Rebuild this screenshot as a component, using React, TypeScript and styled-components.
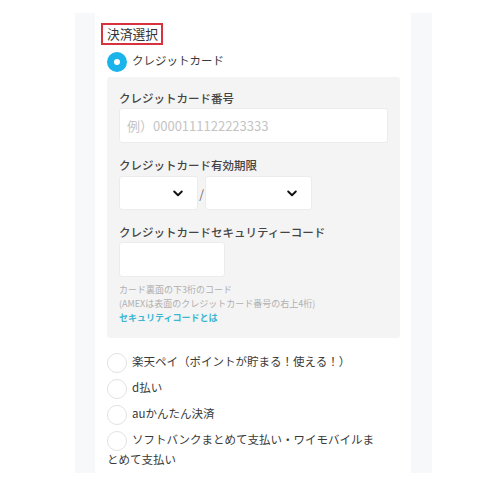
import React from 'react'
import styled, { createGlobalStyle } from 'styled-components'

const GlobalStyle = createGlobalStyle`
  html, body {
    margin: 0;
    padding: 0;
    background: #ffffff;
  }
  body {
    font-family: "Noto Sans CJK JP", "Noto Sans", sans-serif;
    color: #333333;
  }
`

const Page = styled.div`
  padding: 13px 0 0 75px;
`

const Column = styled.div`
  width: 357px;
  height: 460px;
  background: #f7f8fa;
  padding: 0 21px 0 20px;
  box-sizing: border-box;
`

const Panel = styled.div`
  height: 100%;
  background: #ffffff;
  padding: 7px 11px 0 12px;
  box-sizing: border-box;
`

const Heading = styled.h2`
  display: inline-block;
  margin: 0 0 0 -6px;
  padding: 0 3px 0 4px;
  border: 2px solid #d8323f;
  font-size: 12.75px;
  line-height: 18px;
  font-weight: 400;
  color: #333333;
`

const Option = styled.div<{ $gap: number }>`
  margin-top: ${(p) => p.$gap}px;
  width: 275px;
  font-size: 11.5px;
  line-height: 20px;
  color: #3a3a3a;
`

const Radio = styled.span<{ $checked?: boolean }>`
  display: inline-block;
  width: 20px;
  height: 20px;
  margin: -4px 5px -4px 0;
  vertical-align: middle;
  box-sizing: border-box;
  border-radius: 50%;
  background: #ffffff;
  border: ${(p) => (p.$checked ? '7px solid #1ab4ea' : '1px solid #e2e2e2')};
`

const CardBox = styled.div`
  margin-top: 7px;
  width: 293px;
  background: #f4f4f4;
  border-radius: 3px;
  padding: 13px 12px 13px 12px;
  box-sizing: border-box;
`

const Label = styled.div<{ $spaced?: boolean }>`
  margin-top: ${(p) => (p.$spaced ? '14px' : '0')};
  font-size: 11.5px;
  line-height: 16px;
  font-weight: 500;
  color: #444444;
`

const TextInput = styled.input<{ $width: number }>`
  display: block;
  margin-top: 2px;
  width: ${(p) => p.$width}px;
  height: 35px;
  box-sizing: border-box;
  border: 1px solid #ececec;
  border-radius: 3px;
  background: #ffffff;
  padding: 0 7px;
  font-family: "Noto Sans CJK JP", "Noto Sans", sans-serif;
  font-size: 13px;
  outline: none;
  &::placeholder {
    color: #c4c4c4;
  }
`

const ExpiryRow = styled.div`
  display: flex;
  align-items: center;
  margin-top: 3px;
`

const Select = styled.div<{ $width: number }>`
  width: ${(p) => p.$width}px;
  height: 34px;
  box-sizing: border-box;
  border: 1px solid #ececec;
  border-radius: 3px;
  background: #ffffff;
  display: flex;
  align-items: center;
  justify-content: flex-end;
  padding-right: 14px;
`

const Slash = styled.span`
  width: 7px;
  text-align: center;
  font-size: 12px;
  color: #666666;
`

const Help = styled.div`
  margin-top: 6px;
  font-size: 9px;
  line-height: 14px;
  color: #b0b0b0;
`

const HelpLink = styled.div`
  font-size: 9px;
  line-height: 14px;
  font-weight: 700;
  color: #3bb7d2;
`

const Chevron = () => (
  <svg width="10" height="7" viewBox="0 0 10 7">
    <polyline
      points="1.2,1.5 5,5.2 8.8,1.5"
      fill="none"
      stroke="#111111"
      strokeWidth="1.9"
      strokeLinecap="round"
      strokeLinejoin="round"
    />
  </svg>
)

const others = [
  '楽天ペイ（ポイントが貯まる！使える！）',
  'd払い',
  'auかんたん決済',
  'ソフトバンクまとめて支払い・ワイモバイルまとめて支払い',
]

const App = () => (
  <>
    <GlobalStyle />
    <Page>
      <Column>
        <Panel>
          <Heading>決済選択</Heading>
          <Option $gap={5}>
            <Radio $checked />
            クレジットカード
          </Option>
          <CardBox>
            <Label>クレジットカード番号</Label>
            <TextInput $width={269} placeholder="例）0000111122223333" />
            <Label $spaced>クレジットカード有効期限</Label>
            <ExpiryRow>
              <Select $width={79}>
                <Chevron />
              </Select>
              <Slash>/</Slash>
              <Select $width={107}>
                <Chevron />
              </Select>
            </ExpiryRow>
            <Label $spaced>クレジットカードセキュリティーコード</Label>
            <TextInput $width={106} />
            <Help>
              カード裏面の下3桁のコード
              <br />
              (AMEXは表面のクレジットカード番号の右上4桁)
            </Help>
            <HelpLink>セキュリティコードとは</HelpLink>
          </CardBox>
          {others.map((name, i) => (
            <Option key={name} $gap={i === 0 ? 13 : 6}>
              <Radio />
              {name}
            </Option>
          ))}
        </Panel>
      </Column>
    </Page>
  </>
)

export default App
